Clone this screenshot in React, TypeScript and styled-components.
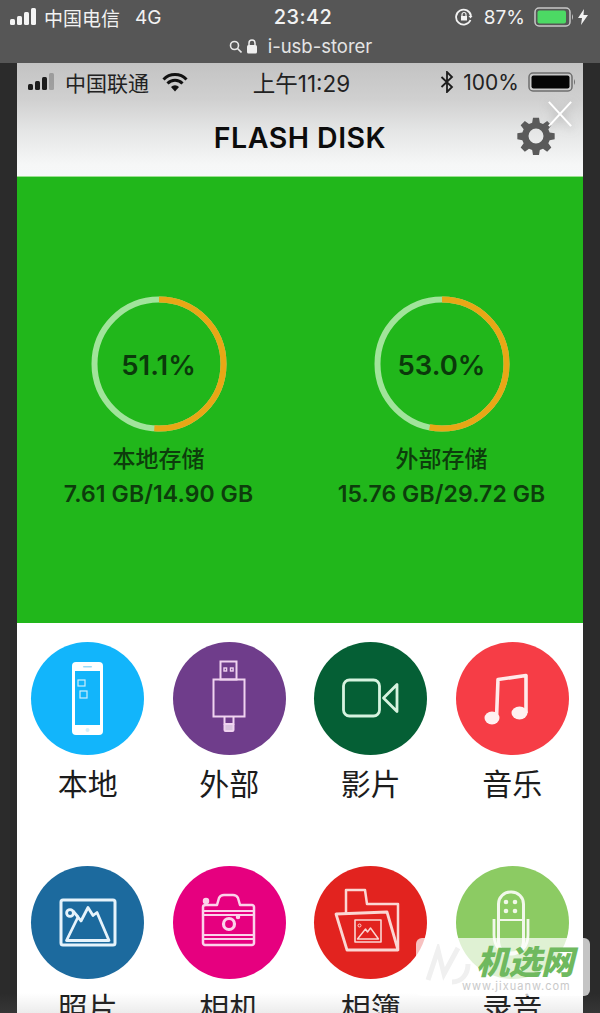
import React from "react";
import styled, { createGlobalStyle } from "styled-components";

const Global = createGlobalStyle`
  html, body { margin: 0; padding: 0; background: #2a2a2a; }
  body { width: 600px; height: 1013px; overflow: hidden; font-family: Inter, "Noto Sans CJK SC", sans-serif; }
`;
const Page = styled.div`
  width: 600px; height: 1013px; overflow: hidden; position: relative; background: #2b2b2b;
  display: flex; flex-direction: column;
`;
const Browser = styled.header`
  height: 63px; flex: none; background: #565656; color: #f2f2f2;
  display: flex; flex-direction: column;
`;
const PhoneStatus = styled.div`
  height: 34px; display: grid; grid-template-columns: 1fr auto 1fr; align-items: center; padding: 0 10px;
  font-size: 19px; font-weight: 400;
`;
const Side = styled.div<{ $end?: boolean }>`
  display: flex; align-items: center; gap: ${p => (p.$end ? "9px" : "5px")};
  justify-content: ${p => (p.$end ? "flex-end" : "flex-start")};
`;
const Net = styled.span`margin-left: 10px; font-size: 19px;`;
const Clock = styled.span`font-size: 20px; font-weight: 500; letter-spacing: .4px; transform: translateX(3px);`;
const UrlRow = styled.div`
  height: 24px; display: flex; align-items: center; justify-content: center; gap: 4px; font-size: 18.500px; color: #e4e4e4;
  margin-left: -1px; padding-left: 2px; font-weight: 400;
`;
const UrlText = styled.span`margin-left: 6px;`;
const Percent = styled.span`margin-left: 2px;`;
const App_ = styled.main`
  width: 566px; margin-left: 17px; flex: 1; background: #fff; display: flex; flex-direction: column; min-height: 0;
`;
const Head = styled.div`
  height: 114px; flex: none; display: flex; flex-direction: column;
  background: linear-gradient(#c3c3c3 0%, #d0d0d0 32%, #e6e7e7 62%, #f6f7f7 90%, #f7f8f8 100%);
  border-bottom: 1px solid #9be08f; box-sizing: border-box;
`;
const InnerStatus = styled.div`
  height: 38px; display: grid; grid-template-columns: 1fr auto 1fr; align-items: center; padding: 0 6px 0 11px;
  color: #222; font-size: 21px;
`;
const InnerClock = styled.span`font-size: 22.500px; transform: translateX(-1px);`;
const Carrier = styled.span`margin-left: 3px;`;
const Wifi = styled.svg`margin-left: 8px;`;
const Title = styled.h1`margin: 0; font-size: 28.500px; font-weight: 600; color: #0c0c0c; letter-spacing: .5px; white-space: nowrap;`;
const TitleRow = styled.div`
  flex: 1; display: flex; align-items: center; justify-content: center; position: relative; padding-bottom: 2px;
`;
const Gear = styled.svg`position: absolute; right: 27px; top: 15px;`;
const Close = styled.svg`
  position: absolute; right: 10px; top: -1px;
  filter: drop-shadow(0 2px 5px rgba(120,120,120,.55));
`;
const Charge = styled.svg`margin-left: -6px; margin-right: 2px;`;
const Storage = styled.section`
  height: 446px; flex: none; background: #21b71b; display: grid; grid-template-columns: 1fr 1fr;
  padding-top: 119px; box-sizing: border-box; align-content: start;
`;
const Gauge = styled.div`display: flex; flex-direction: column; align-items: center; color: #0d3d0c;`;
const Ring = styled.div`position: relative; width: 136px; height: 136px; display: flex; align-items: center; justify-content: center;`;
const RingSvg = styled.svg`position: absolute; inset: 0;`;
const Pct = styled.span`font-size: 27.500px; font-weight: 600; letter-spacing: 0; color: #0b3a0b; padding-top: 2px;`;
const GaugeName = styled.div`margin-top: 12px; font-size: 23px; line-height: 30px; font-weight: 500;`;
const GaugeVal = styled.div`margin-top: 6px; font-size: 23px; line-height: 28px; font-weight: 600; letter-spacing: .1px; white-space: nowrap;`;
const Grid = styled.section`
  display: grid; grid-template-columns: repeat(4, 1fr); grid-auto-rows: 223.5px; padding-top: 19px;
`;
const Tile = styled.div`display: flex; flex-direction: column; align-items: center;`;
const Disc = styled.div<{ $c: string }>`
  width: 113px; height: 113px; border-radius: 50%; background: ${p => p.$c}; flex: none;
`;
const DiscArt = styled.svg`display: block;`;
const TileLabel = styled.div`margin-top: 11px; font-size: 30px; line-height: 37px; color: #1c1c1c;`;
const Mark = styled.div`
  position: absolute; left: 416px; top: 938px; width: 174px; height: 58px; border-radius: 6px;
  background: rgba(255,255,255,.72); overflow: hidden;
`;
const MarkLogo = styled.svg`position: absolute; left: 8px; top: 6px;`;
const MarkName = styled.div`
  position: absolute; left: 60px; top: 3px; font-size: 33px; line-height: 42px; font-weight: 900; font-style: italic; color: #6fb95f;
  letter-spacing: -.5px; white-space: nowrap;
`;
const MarkUrl = styled.div`
  position: absolute; left: 46px; top: 42px; font-size: 11px; line-height: 13px; color: #c9c9c9; letter-spacing: 1px; white-space: nowrap;
`;
const Shade = styled.div`
  position: absolute; left: 0; right: 0; bottom: 0; height: 20px;
  background: linear-gradient(rgba(120,120,120,0), rgba(120,120,120,.14));
`;

const Bars = ({ c, dim }: { c: string; dim?: boolean }) => (
  <svg width="29" height="18" viewBox="0 0 29 18">
    <rect x="0" y="11" width="5" height="6" rx="1.5" fill={c} />
    <rect x="7" y="8" width="5" height="9" rx="1.5" fill={c} />
    <rect x="14" y="4" width="5" height="13" rx="1.5" fill={c} />
    <rect x="21" y="0" width="5" height="17" rx="1.5" fill={c} opacity={dim ? 0.25 : 1} />
  </svg>
);
const Battery = ({ w, h, fill, line, level }: { w: number; h: number; fill: string; line: string; level: number }) => (
  <svg width={w + 4} height={h} viewBox={`0 0 ${w + 4} ${h}`}>
    <rect x="1" y="1" width={w - 2} height={h - 2} rx="4" fill="none" stroke={line} strokeWidth="1.5" />
    <rect x="3.5" y="3.5" width={(w - 7) * level} height={h - 7} rx="2" fill={fill} />
    <path d={`M${w + 1} ${h / 2 - 3}q2 3 0 6z`} fill={line} />
  </svg>
);

const W = "#ffffff";
const icons: Record<string, React.ReactNode> = {
  phone: (
    <>
      <rect x="41" y="20" width="31" height="73" rx="4" fill={W} />
      <rect x="44" y="29" width="25" height="54" fill="#12b5fb" />
      <rect x="52" y="24" width="9" height="1.5" rx=".7" fill="#9adcf8" />
      <circle cx="56.5" cy="88" r="2" fill="#d4f0fc" />
      <g fill="none" stroke="#cdeefc" strokeWidth="1.2">
        <rect x="47" y="38" width="7" height="6" />
        <rect x="49" y="49" width="7" height="7" />
      </g>
    </>
  ),
  usb: (
    <g fill="none" stroke="#f0d3f0" strokeWidth="2">
      <rect x="47.5" y="19.5" width="16" height="18" />
      <rect x="51" y="26" width="2.6" height="3" strokeWidth="1.4" />
      <rect x="57.5" y="26" width="2.6" height="3" strokeWidth="1.4" />
      <rect x="40.5" y="37.5" width="31" height="37" />
      <path d="M51.5 75v7h9v-7" />
      <rect x="51.5" y="82" width="9" height="7" rx="1" fill="#d9c4df" />
    </g>
  ),
  video: (
    <g fill="none" stroke="#d6f3df" strokeWidth="2.8" strokeLinejoin="round">
      <rect x="29.500" y="38" width="36" height="36" rx="6" />
      <path d="M69.500 56L83 42.500v27z" />
    </g>
  ),
  music: (
    <g>
      <path d="M40.500 76L42 37.500 70 33.500 70 71" fill="none" stroke="#ffeaea" strokeWidth="3.600" strokeLinejoin="round" />
      <ellipse cx="36" cy="76" rx="7.500" ry="6.500" fill="#fff1f1" />
      <ellipse cx="63.500" cy="71" rx="8" ry="6.500" fill="#fff1f1" />
    </g>
  ),
  photo: (
    <g fill="none" stroke="#e6f3fb" strokeWidth="2.800" strokeLinejoin="round">
      <rect x="30" y="34" width="54" height="45" rx="2" strokeWidth="3" />
      <circle cx="39" cy="47" r="3.400" />
      <path d="M35.500 74.500L47 51l3 4 7-13.500 5 8 4-3 12 28z" />
      <path d="M42 45l5 6" />
    </g>
  ),
  camera: (
    <g fill="none" stroke="#fbd2ea" strokeWidth="2.500" strokeLinejoin="round">
      <path d="M33 39h11l2-7c1-2 3-3 5-3h9c2 0 4 1 5 3l2 7h12c1 0 2 1 2 2v36c0 1-1 2-2 2H32c-1 0-2-1-2-2V41c0-1 1-2 3-2z" />
      <path d="M30 49h51M30 69h51M30 45h51M30 73h51" strokeWidth="1.800" />
      <circle cx="56" cy="58" r="5.500" strokeWidth="3.200" />
      <circle cx="33" cy="35" r="2" fill="#fbd2ea" />
      <circle cx="65" cy="51" r="1" fill="#fbd2ea" />
    </g>
  ),
  folder: (
    <g fill="none" stroke="#fbd7d3" strokeWidth="2.500" strokeLinejoin="round">
      <path d="M32 47V24h19l2 14h31v45" />
      <path d="M22 48l51-2 11 38H33z" strokeWidth="2.800" />
      <rect x="41" y="54" width="26" height="22" strokeWidth="1.600" />
      <circle cx="45.500" cy="59.500" r="1.500" strokeWidth="1" />
      <path d="M43.500 73l8-10 2 3 3-4 8 11z" strokeWidth="1.400" />
    </g>
  ),
  mic: (
    <g>
      <rect x="42.500" y="26" width="25" height="62" rx="12" fill="none" stroke="#f2f8ea" strokeWidth="3" />
      <path d="M38 53v16c0 12 7 18 17 18s17-6 17-18V53" fill="none" stroke="#f2f8ea" strokeWidth="2.800" />
      <path d="M43 54h24" stroke="#f2f8ea" strokeWidth="2" />
      <g fill="#f2f8ea">
        <circle cx="50" cy="36" r="2.300" />
        <circle cx="59" cy="36" r="2.300" />
        <circle cx="50" cy="45" r="2.300" />
        <circle cx="59" cy="45" r="2.300" />
      </g>
    </g>
  ),
};

const tiles = [
  { n: "本地", c: "#12b5fb", i: "phone" },
  { n: "外部", c: "#6f3d8b", i: "usb" },
  { n: "影片", c: "#055f35", i: "video" },
  { n: "音乐", c: "#f63d46", i: "music" },
  { n: "照片", c: "#1c6a9e", i: "photo" },
  { n: "相机", c: "#e6007f", i: "camera" },
  { n: "相簿", c: "#e2231f", i: "folder" },
  { n: "录音", c: "#8ccb63", i: "mic" },
];

const R = 64.5;
const CIRC = 2 * Math.PI * R;
const GaugeView = ({ pct, name, val }: { pct: number; name: string; val: string }) => (
  <Gauge>
    <Ring>
      <RingSvg width="136" height="136" viewBox="0 0 136 136">
        <circle cx="68" cy="68" r={R} fill="none" stroke="#a1e49b" strokeWidth="6" />
        <circle
          cx="68" cy="68" r={R} fill="none" stroke="#e8a716" strokeWidth="6"
          strokeDasharray={`${(CIRC * pct) / 100} ${CIRC}`}
          transform="rotate(-90 68 68)"
        />
      </RingSvg>
      <Pct>{pct.toFixed(1)}%</Pct>
    </Ring>
    <GaugeName>{name}</GaugeName>
    <GaugeVal>{val}</GaugeVal>
  </Gauge>
);

export default function App() {
  return (
    <Page>
      <Global />
      <Browser>
        <PhoneStatus>
          <Side>
            <Bars c="#f4f4f4" />
            <span>中国电信</span>
            <Net>4G</Net>
          </Side>
          <Clock>23:42</Clock>
          <Side $end>
            <svg width="18" height="18" viewBox="0 0 18 18" fill="none" stroke="#f2f2f2" strokeWidth="1.800">
              <path d="M15.500 12A7.500 7.500 0 1 1 16 8" />
              <rect x="6" y="8" width="6" height="4.500" fill="#f2f2f2" stroke="none" />
              <path d="M7 8V6.500a2 2 0 0 1 4 0V8" strokeWidth="1.200" />
              <path d="M13.500 8h4l-2 2.500z" fill="#f2f2f2" stroke="none" />
            </svg>
            <Percent>87%</Percent>
            <Battery w={37} h={20} fill="#4cd964" line="#c8c8c8" level={0.95} />
            <Charge width="10" height="16" viewBox="0 0 10 16">
              <path d="M6 0L0 9h4l-1 7 7-10H5.500z" fill="#f2f2f2" />
            </Charge>
          </Side>
        </PhoneStatus>
        <UrlRow>
          <svg width="13" height="13" viewBox="0 0 13 13" fill="none" stroke="#e8e8e8" strokeWidth="1.600">
            <circle cx="5.500" cy="5.500" r="4" />
            <path d="M8.500 8.500l4 4" />
          </svg>
          <svg width="12" height="15" viewBox="0 0 12 15">
            <rect x="1" y="6" width="10" height="8.500" rx="1.500" fill="#f0f0f0" />
            <path d="M3 6.500V4a3 3 0 0 1 6 0v2.500" fill="none" stroke="#f0f0f0" strokeWidth="1.500" />
          </svg>
          <UrlText>i-usb-storer</UrlText>
        </UrlRow>
      </Browser>
      <App_>
        <Head>
          <InnerStatus>
            <Side>
              <Bars c="#1b1b1b" dim />
              <Carrier>中国联通</Carrier>
              <Wifi width="26" height="20" viewBox="0 0 26 20">
                <g fill="none" stroke="#111" strokeWidth="3">
                  <path d="M1.500 7.500a16 16 0 0 1 23 0" />
                  <path d="M5.500 11.500a10.500 10.500 0 0 1 15 0" />
                </g>
                <path d="M9 15a5.500 5.500 0 0 1 8 0l-4 4.500z" fill="#111" />
              </Wifi>
            </Side>
            <InnerClock>上午11:29</InnerClock>
            <Side $end>
              <svg width="14" height="22" viewBox="0 0 14 22" fill="none" stroke="#1c1c1c" strokeWidth="1.800">
                <path d="M1.500 6l10.500 10-5 5V1l5 5L1.500 16" />
              </svg>
              <span>100%</span>
              <Battery w={45} h={20} fill="#050505" line="#6d6d6d" level={1} />
            </Side>
          </InnerStatus>
          <TitleRow>
            <Title>FLASH DISK</Title>
            <Gear width="40" height="40" viewBox="0 0 24 24" fill="#5a5a5a">
              <path
                fillRule="evenodd"
                d="M10.200 1h3.600l.5 3 1.900.8 2.500-1.800 2.500 2.500-1.800 2.500.8 1.900 3 .5v3.600l-3 .5-.8 1.900 1.800 2.500-2.500 2.500-2.500-1.800-1.900.8-.5 3h-3.600l-.5-3-1.900-.8-2.500 1.800-2.500-2.500 1.800-2.500-.8-1.900-3-.5v-3.600l3-.5.8-1.900-1.800-2.500 2.500-2.500 2.500 1.800 1.900-.8zM12 7.500a4.500 4.500 0 1 0 0 9 4.500 4.500 0 0 0 0-9z"
              />
            </Gear>
            <Close width="26" height="28" viewBox="0 0 28 30" fill="none" stroke="#fff" strokeWidth="2.200">
              <path d="M2 2l24 26M26 2L2 28" />
            </Close>
          </TitleRow>
        </Head>
        <Storage>
          <GaugeView pct={51.1} name="本地存储" val="7.61 GB/14.90 GB" />
          <GaugeView pct={53.0} name="外部存储" val="15.76 GB/29.72 GB" />
        </Storage>
        <Grid>
          {tiles.map(t => (
            <Tile key={t.n}>
              <Disc $c={t.c}>
                <DiscArt width="113" height="113" viewBox="0 0 113 113">{icons[t.i]}</DiscArt>
              </Disc>
              <TileLabel>{t.n}</TileLabel>
            </Tile>
          ))}
        </Grid>
      </App_>
      <Shade />
      <Mark>
        <MarkLogo width="50" height="44" viewBox="0 0 50 44" fill="none" stroke="#f0f0f0" strokeWidth="5">
          <path d="M4 36L14 6l6 24L34 4" />
          <path d="M28 38c10 0 16-8 16-18" />
        </MarkLogo>
        <MarkName>机选网</MarkName>
        <MarkUrl>www.jixuanw.com</MarkUrl>
      </Mark>
    </Page>
  );
}
